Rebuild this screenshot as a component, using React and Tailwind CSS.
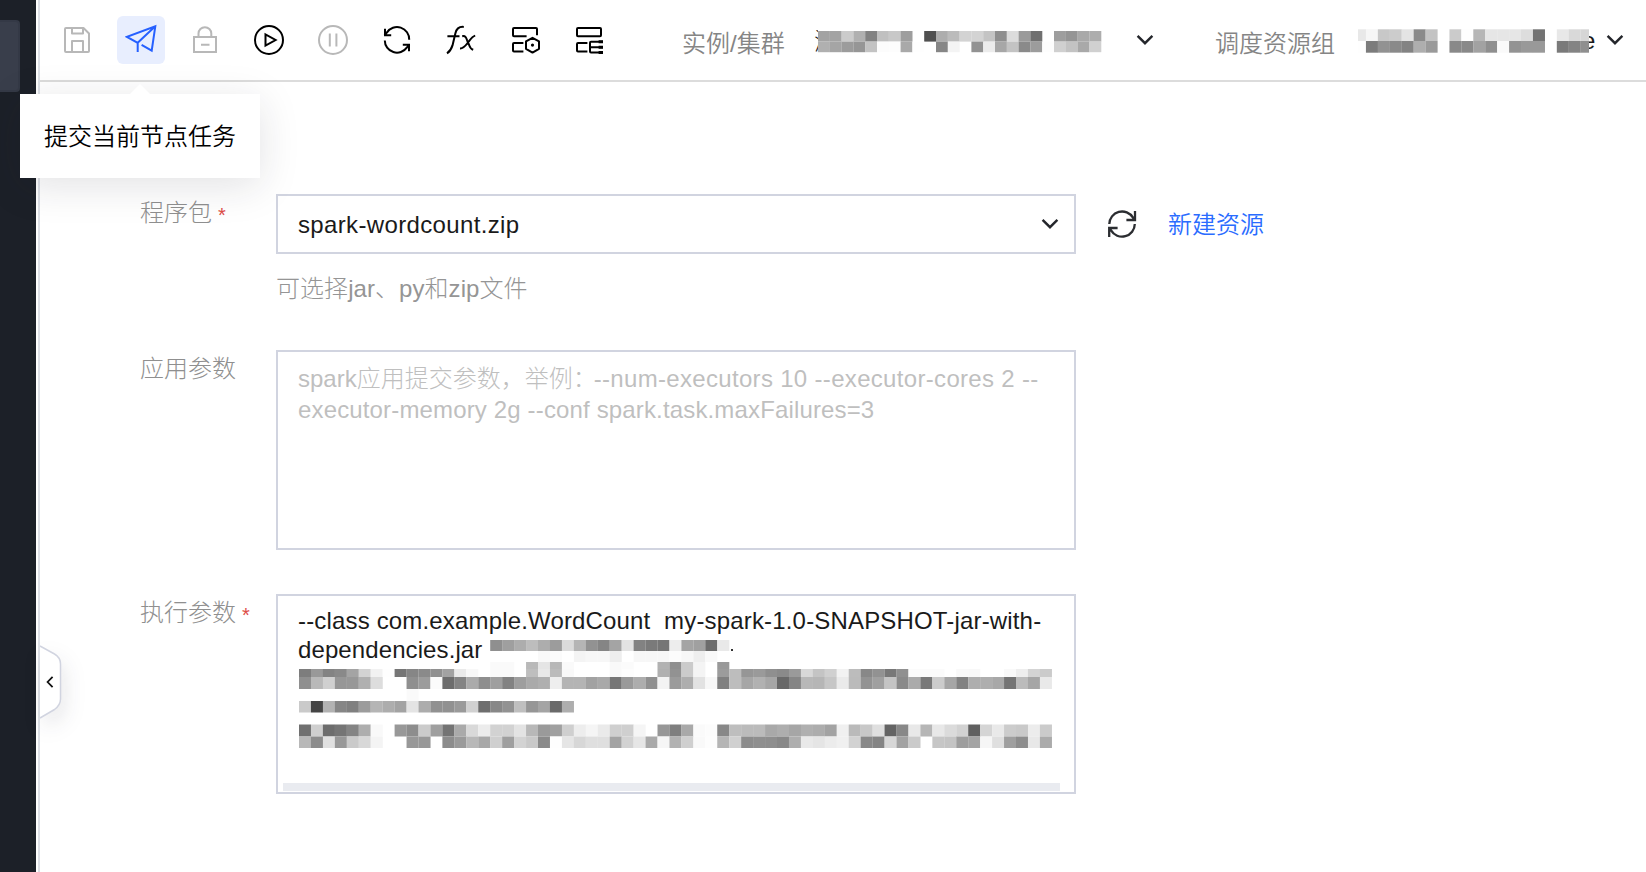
import React from "react";

const STROKE = { fill: "none", stroke: "currentColor", strokeWidth: 2 };

function Mosaic({ width, height, cell, offset = 0, rows, className }) {
  return (
    <svg className={className} width={width} height={height} viewBox={`0 0 ${width} ${height}`} aria-hidden="true">
      {rows.map((row, r) =>
        row.tones.split(" ").map((tone, i) => {
          if (tone === "ff") return null;
          const x = offset + (i + (row.start || 0)) * cell;
          return <rect key={`${r}-${i}`} x={x} y={row.y} width={cell + 0.1} height={row.h} fill={`#${tone}${tone}${tone}`} />;
        })
      )}
    </svg>
  );
}

const INSTANCE_ROWS = [
  { y: 2, h: 10.6, tones: "a3 a3 cb b0 82 c0 c8 9e ff 50 ad bb d3 d3 c4 8f dc 9a 70 ff 9e 95 a9 ad" },
  { y: 12.6, h: 10.6, tones: "b0 a5 9c 96 c3 fc fd a9 fe ff 86 f4 ff 92 ec a7 c3 8a 9c fd d0 c3 a9 d0" },
];

const GROUP_ROWS = [
  { y: 0.3, h: 11.7, tones: "e8 f6 c8 cc e4 8a c3 ff cb fe b6 e6 e6 e6 dd 73 ff e8 d9 d6" },
  { y: 12, h: 11.7, tones: "fe 7c 92 8a 83 ae 9a ff 89 89 a2 8f fa 93 99 99 ff 7a 84 8f" },
];

const ARGUMENT_ROWS = [
  { y: 0, h: 11, start: 16, tones: "8f 9f ad bd ad 9c db b5 92 85 a4 e3 82 7a 76 ed a4 a0 6c e9" },
  { y: 11, h: 11, start: 20, tones: "f9 fb ff f4 f7 f7 ee ff f7 f7 f7 fc f7 ee f9" },
  { y: 22, h: 7, start: 16, tones: "fa fa ff b9 e5 b7 fa ff ff ff f9 fb ff ff b2 8f cb f4 ff 99" },
  { y: 29, h: 8, tones: "7d 99 83 89 a4 d3 f2 fe 76 86 8a 90 a2 ea f8 ff fa fa ff be e8 bb f9 ff ff ff f9 fd ff ff b0 92 cb f4 ff 9c bd 96 9a 8f 8a 9a d8 c4 d0 f2 bc 88 92 78 90 fb fb fb ff f9 f8 ff ff f9 ee d4 cb" },
  { y: 37, h: 12, tones: "8f b9 d0 97 98 b0 dd ff ff 8f 9c fb 6d 84 ab 8e 9f 82 9e aa af ee b4 b4 a2 a9 76 9a ad 90 f3 9b ae e2 f7 80 bd a6 b1 a6 68 85 b8 b6 c6 ea bb 93 a0 c4 8a ab 79 cc a6 82 ae ae a8 74 bb a6 e9" },
  { y: 49, h: 12, start: 9, tones: "fa" },
  { y: 61, h: 11.5, tones: "ca 44 b2 86 80 9c b5 ad a3 e4 ac 91 91 9a d1 6e 88 92 bf 96 a4 6a ae" },
  { y: 84.5, h: 12, tones: "70 cf 6d 75 84 ae f9 ff 98 8d cb 9f 74 aa d9 ec d2 d2 e3 b8 9a a0 cf ed f5 ea cf cf f5 ff 97 7f a9 fa fc 88 be bb bb a9 ae a6 b0 ad a3 f0 ba c8 df 64 88 e8 b6 e8 db d2 60 d5 e9 cc c9 ec cb" },
  { y: 96.5, h: 11.5, tones: "b8 8c e0 98 ca d8 f4 ff ff 98 98 ff 8c 9a b8 a8 cf 9f d3 c9 8a fe e5 d7 df df a3 d2 e6 a9 f6 b2 cf f9 fd b5 d0 8c 8f 8e 88 ae e9 e5 ec f0 d2 88 84 d7 a2 ca ff c6 c4 9e a4 f6 df 9f 8d e8 ab" },
];

const SaveIcon = () => (
  <svg width="32" height="32" viewBox="0 0 32 32" {...STROKE} strokeLinejoin="round">
    <path d="M5 4H22.5L28 9.5V27A1 1 0 0 1 27 28H5A1 1 0 0 1 4 27V5A1 1 0 0 1 5 4Z" />
    <path d="M11 4V9.5H22V4M11 28V17H22V28" />
  </svg>
);

const SendIcon = () => (
  <svg width="32" height="32" viewBox="0 0 32 32" {...STROKE}>
    <path d="M12.7 28V18.8L2 12.9L30.3 2.4L26.7 26.6L16.6 20.8M12.7 18.8L30 2.6" />
  </svg>
);

const LockIcon = () => (
  <svg width="32" height="32" viewBox="0 0 32 32" {...STROKE}>
    <path d="M5 13H27V28H5ZM9.5 13V9.6A6.4 6.4 0 0 1 22.3 9.6V13M12 20.8H20.5" />
  </svg>
);

const PlayIcon = () => (
  <svg width="32" height="32" viewBox="0 0 32 32" {...STROKE}>
    <circle cx="16" cy="16" r="14" />
    <path d="M12.5 10.4V21.6L22.6 16Z" />
  </svg>
);

const PauseIcon = () => (
  <svg width="32" height="32" viewBox="0 0 32 32" {...STROKE}>
    <circle cx="16" cy="16" r="14" />
    <path d="M12.8 9.5V22.5M19.4 9.5V22.5" />
  </svg>
);

const RotateIcon = () => (
  <svg width="32" height="32" viewBox="0 0 32 32" {...STROKE}>
    <path d="M28.2 15.8A12.2 12.2 0 0 0 5.8 8.6L3.4 11.3M4 4.8V11.3H10.2" />
    <path d="M3.8 16.4A12.2 12.2 0 0 0 26 23.4L28.4 20.8M28 27.2V20.8H21.8" />
  </svg>
);

const FunctionIcon = () => (
  <svg width="32" height="32" viewBox="0 0 32 32" {...STROKE}>
    <path d="M2 29.3C4.6 27.6 6.4 25.2 7.5 21.4L10.4 9.2C11.4 5 13.6 2.4 18.8 2.9M2.4 12.3H14.5" />
    <path d="M17.2 12.2C20.6 11.5 21.3 13.8 22.2 16.6L24.2 21.2C25 23.6 26 25 28.2 25.8M30.2 11.6C27 12.4 25.4 15.4 22.9 18.6C20.6 21.6 18.8 24.6 15 24.4" />
  </svg>
);

const PanelGearIcon = () => (
  <svg width="32" height="32" viewBox="0 0 32 32" {...STROKE} strokeLinejoin="round">
    <path d="M17.6 12.2H5A1 1 0 0 1 4 11.2V5A1 1 0 0 1 5 4H27A1 1 0 0 1 28 5V11.2M14.4 19H5A1 1 0 0 0 4 20V26.6A1 1 0 0 0 5 27.6H14.4" />
    <path d="M23.5 13.8L30 17.4V24.8L23.5 28.6L17 24.8V17.4Z" />
    <circle cx="23.5" cy="21.1" r="1.6" fill="currentColor" stroke="none" />
  </svg>
);

const PanelTreeIcon = () => (
  <svg width="32" height="32" viewBox="0 0 32 32" {...STROKE} strokeLinejoin="round">
    <path d="M5 4H27A1 1 0 0 1 28 5V11.2A1 1 0 0 1 27 12.2H5A1 1 0 0 1 4 11.2V5A1 1 0 0 1 5 4ZM14.4 19H5A1 1 0 0 0 4 20V26.6A1 1 0 0 0 5 27.6H14.4" />
    <path d="M30 17.8H18A1 1 0 0 0 17 18.8V27.4A1 1 0 0 0 18 28.4H30M17 23.2H30" />
    <path d="M25.6 17.8H30M25.6 23.2H30M25.6 28.4H30" strokeWidth="3" />
  </svg>
);

const ChevronDown = () => (
  <svg width="18" height="12" viewBox="0 0 18 12" fill="none" stroke="#24262b" strokeWidth="2.4">
    <path d="M1.6 1.8L9 9.2L16.4 1.8" />
  </svg>
);

const ReloadIcon = () => (
  <svg width="32" height="32" viewBox="0 0 32 32" fill="none" stroke="#2b2d31" strokeWidth="2.3">
    <path d="M3.3 16A12.8 12.8 0 0 1 27 9.6L28.4 12M29 3V12H20.4" />
    <path d="M28.8 16A12.8 12.8 0 0 1 5 22.4L3.6 20M3.2 29V20H11.6" />
  </svg>
);

const TOOLS = [
  { name: "save", Icon: SaveIcon, tone: "text-[#b8b8b8]" },
  { name: "submit", Icon: SendIcon, tone: "bg-[#e8eefe] text-[#2660ff]" },
  { name: "lock", Icon: LockIcon, tone: "text-[#b8b8b8]" },
  { name: "run", Icon: PlayIcon, tone: "text-black" },
  { name: "pause", Icon: PauseIcon, tone: "text-[#b8b8b8]" },
  { name: "reload", Icon: RotateIcon, tone: "text-black" },
  { name: "function", Icon: FunctionIcon, tone: "text-black" },
  { name: "settings", Icon: PanelGearIcon, tone: "text-black" },
  { name: "structure", Icon: PanelTreeIcon, tone: "text-black" },
];

function Toolbar() {
  return (
    <header className="flex h-[82px] shrink-0 items-start border-b-2 border-[#dcdcdc] pl-[13px]">
      <nav className="mt-4 flex gap-4">
        {TOOLS.map(({ name, Icon, tone }) => (
          <button key={name} aria-label={name} className={`flex size-12 items-center justify-center rounded-md ${tone}`}>
            <Icon />
          </button>
        ))}
      </nav>
      <span className="mt-7 ml-[69px] w-[105px] leading-8 font-[350] whitespace-nowrap text-[#858585]">实例/集群</span>
      <div className="mt-[29px] ml-[27px] flex h-[26px] w-[289px]">
        <span className="-mt-[3px] -mr-5 w-6 shrink-0 leading-8 text-[#1a1a1a]">测</span>
        <Mosaic className="relative shrink-0 bg-white" width={284} height={26} cell={11.8} rows={INSTANCE_ROWS} />
      </div>
      <div className="mt-[34px] ml-[33px]">
        <ChevronDown />
      </div>
      <span className="mt-7 ml-[61px] w-[121px] leading-8 font-[350] whitespace-nowrap text-[#858585]">调度资源组</span>
      <div className="mt-[29px] ml-[22px] flex h-6">
        <Mosaic className="relative z-10 shrink-0 bg-white" width={231} height={24} cell={11.93} offset={-4} rows={GROUP_ROWS} />
        <span className="-ml-[7px] w-[13px] leading-6 text-[#1a1a1a]">e</span>
      </div>
      <div className="mt-[34px] ml-[11px]">
        <ChevronDown />
      </div>
    </header>
  );
}

function Field({ label, required, className, children }) {
  return (
    <div className={`flex items-start ${className}`}>
      <label className="mt-[3px] flex w-[136px] shrink-0 items-center leading-8 text-[#8f8f8f]">
        {label}
        {required && <span className="ml-[6px] h-8 text-[20px] leading-9 text-[#dd4b46]">*</span>}
      </label>
      {children}
    </div>
  );
}

function Tooltip() {
  return (
    <div className="absolute top-[94px] left-5 flex h-[84px] w-[240px] items-center justify-center bg-white pt-0.5 text-black shadow-[0_8px_40px_rgba(30,34,50,0.13)]">
      <svg className="absolute -top-[10px] left-[110px]" width="20" height="10" viewBox="0 0 20 10">
        <path d="M0 10L10 0L20 10Z" fill="#fff" />
      </svg>
      <span className="font-[350]">提交当前节点任务</span>
    </div>
  );
}

function CollapseHandle() {
  return (
    <svg className="absolute top-[645px] left-10 overflow-visible drop-shadow-[4px_10px_10px_rgba(30,34,50,0.1)]" width="22" height="74" viewBox="0 0 22 74">
      <path d="M0 1L14.5 9Q20.5 12.5 20.5 19V54Q20.5 60 14.5 64.5L0 73" fill="#fff" stroke="#d1d4e0" strokeWidth="1.5" />
      <path d="M12.6 31.8L7.6 37L12.6 42.2" fill="none" stroke="#111" strokeWidth="1.8" />
    </svg>
  );
}

export default function App() {
  return (
    <div className="relative flex h-[872px] w-[1646px] overflow-hidden bg-white font-['Liberation_Sans','Noto_Sans_CJK_SC',sans-serif] text-[24px] font-light">
      <aside className="w-9 shrink-0 bg-[#1c2028] pt-5">
        <div className="h-[72px] w-5 rounded-r border-2 border-l-0 border-[#343946] bg-[#393e4b]" />
      </aside>
      <main className="ml-0.5 flex min-w-0 flex-1 flex-col border-l-2 border-[#dde0e6]">
        <Toolbar />
        <form className="flex flex-col pt-[112px] pl-[100px]">
          <Field label="程序包" required className="h-[156px]">
            <div>
              <div className="flex items-center">
                <div className="flex h-[60px] w-[800px] items-center justify-between border-2 border-[#d1d4e0] pr-[15px] pl-5 text-[#1a1a1a]">
                  <span className="pt-0.5 leading-8 tracking-[0.35px]">spark-wordcount.zip</span>
                  <ChevronDown />
                </div>
                <span className="ml-[30px]">
                  <ReloadIcon />
                </span>
                <a className="ml-[30px] pt-0.5 leading-8 font-[350] text-[#2a6cff]">新建资源</a>
              </div>
              <p className="mt-[19px] leading-8 tracking-[0.06px] text-[#959595]">可选择jar、py和zip文件</p>
            </div>
          </Field>
          <Field label="应用参数" className="h-[244px]">
            <div className="h-[200px] w-[800px] border-2 border-[#d1d4e0] pt-[11px] pl-5 leading-[31px] whitespace-pre text-[#bfbfbf]">
              <div>
                spark应用提交参数，举例：<span className="-ml-[3px] tracking-[0.32px]">--num-executors 10 --executor-cores 2 --</span>
              </div>
              <div className="tracking-[0.15px]">executor-memory 2g --conf spark.task.maxFailures=3</div>
            </div>
          </Field>
          <Field label="执行参数" required>
            <div className="relative flex h-[200px] w-[800px] flex-col border-2 border-[#d1d4e0] pt-[10px] pl-5 leading-[29px] whitespace-pre text-[#1a1a1a]">
              <div className="tracking-[0.165px]">--class com.example.WordCount  my-spark-1.0-SNAPSHOT-jar-with-</div>
              <div className="tracking-[0.1px]">dependencies.jar</div>
              <Mosaic className="absolute top-[44px] left-[21px]" width={753} height={108} cell={11.95} rows={ARGUMENT_ROWS} />
              <span className="absolute top-[53px] left-[453px] size-0.5 bg-[#333]" />
              <div className="mt-auto mb-px -ml-[15px] h-2 w-[777px] bg-[#e9ebf0]" />
            </div>
          </Field>
        </form>
      </main>
      <Tooltip />
      <CollapseHandle />
    </div>
  );
}
